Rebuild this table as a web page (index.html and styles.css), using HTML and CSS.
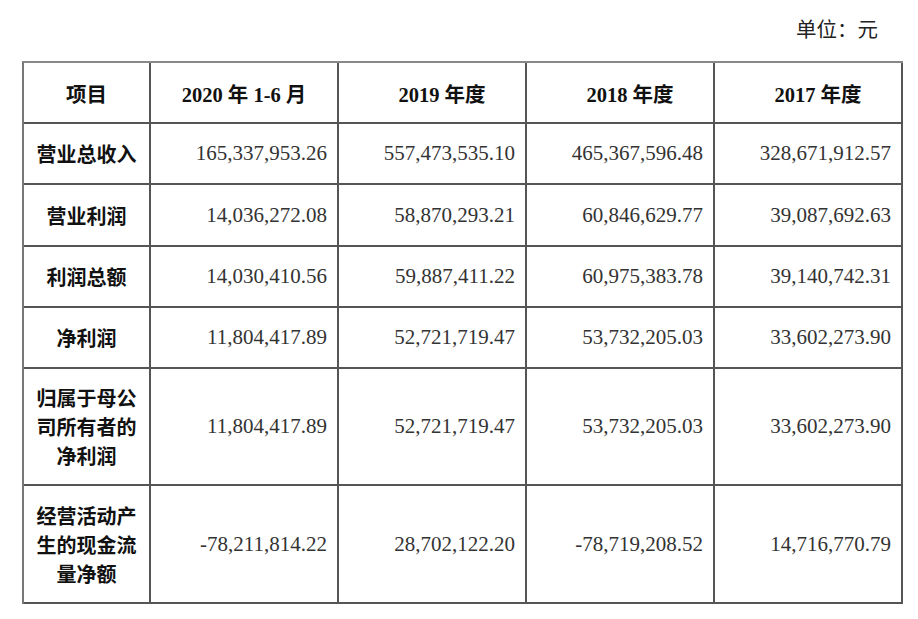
FILE: index.html
```html
<!DOCTYPE html>
<html lang="zh">
<head>
<meta charset="utf-8">
<link rel="stylesheet" href="styles.css">
</head>
<body>
<div class="page">
  <div class="unit">单位：元</div>
  <div class="grid">
    <div class="c hd">项目</div>
    <div class="c hd">2020 年 1-6 月</div>
    <div class="c hd sh">2019 年度</div>
    <div class="c hd sh">2018 年度</div>
    <div class="c hd sh">2017 年度</div>

    <div class="c lb">营业总收入</div>
    <div class="c num">165,337,953.26</div>
    <div class="c num">557,473,535.10</div>
    <div class="c num">465,367,596.48</div>
    <div class="c num">328,671,912.57</div>

    <div class="c lb">营业利润</div>
    <div class="c num">14,036,272.08</div>
    <div class="c num">58,870,293.21</div>
    <div class="c num">60,846,629.77</div>
    <div class="c num">39,087,692.63</div>

    <div class="c lb">利润总额</div>
    <div class="c num">14,030,410.56</div>
    <div class="c num">59,887,411.22</div>
    <div class="c num">60,975,383.78</div>
    <div class="c num">39,140,742.31</div>

    <div class="c lb">净利润</div>
    <div class="c num">11,804,417.89</div>
    <div class="c num">52,721,719.47</div>
    <div class="c num">53,732,205.03</div>
    <div class="c num">33,602,273.90</div>

    <div class="c lb multi">归属于母公<br>司所有者的<br>净利润</div>
    <div class="c num">11,804,417.89</div>
    <div class="c num">52,721,719.47</div>
    <div class="c num">53,732,205.03</div>
    <div class="c num">33,602,273.90</div>

    <div class="c lb multi">经营活动产<br>生的现金流<br>量净额</div>
    <div class="c num">-78,211,814.22</div>
    <div class="c num">28,702,122.20</div>
    <div class="c num">-78,719,208.52</div>
    <div class="c num">14,716,770.79</div>
  </div>
</div>
</body>
</html>
```
FILE: styles.css
```css
html, body {
  margin: 0;
  padding: 0;
  background: #fff;
}
.page {
  padding-left: 22px;
}
.unit {
  width: 881px;
  height: 61px;
  box-sizing: border-box;
  padding-right: 25px;
  line-height: 56px;
  text-align: right;
  font-family: "Noto Sans CJK SC", sans-serif;
  font-size: 20.5px;
  color: #222;
}
.grid {
  display: grid;
  width: 881px;
  box-sizing: border-box;
  grid-template-columns: 127px 188px 188px 188px 188px;
  grid-template-rows: 61px 61px 62px 61px 61px 117px 118px;
  border-left: 2px solid #777;
  border-top: 2px solid #888;
}
.c {
  box-sizing: border-box;
  border-right: 2px solid #555;
  border-bottom: 2px solid #555;
  display: flex;
  align-items: center;
}
.hd {
  justify-content: center;
  font-family: "Liberation Serif", "Noto Sans CJK SC", serif;
  font-weight: bold;
  font-size: 20.5px;
  color: #111;
}
.sh {
  padding-left: 20px;
}
.lb {
  justify-content: center;
  text-align: center;
  font-family: "Noto Sans CJK SC", sans-serif;
  font-weight: 700;
  font-size: 20px;
  color: #111;
}
.multi {
  line-height: 29px;
}
.num {
  justify-content: flex-end;
  padding-right: 10px;
  font-family: "Liberation Serif", serif;
  font-size: 21px;
  color: #333;
}
```
